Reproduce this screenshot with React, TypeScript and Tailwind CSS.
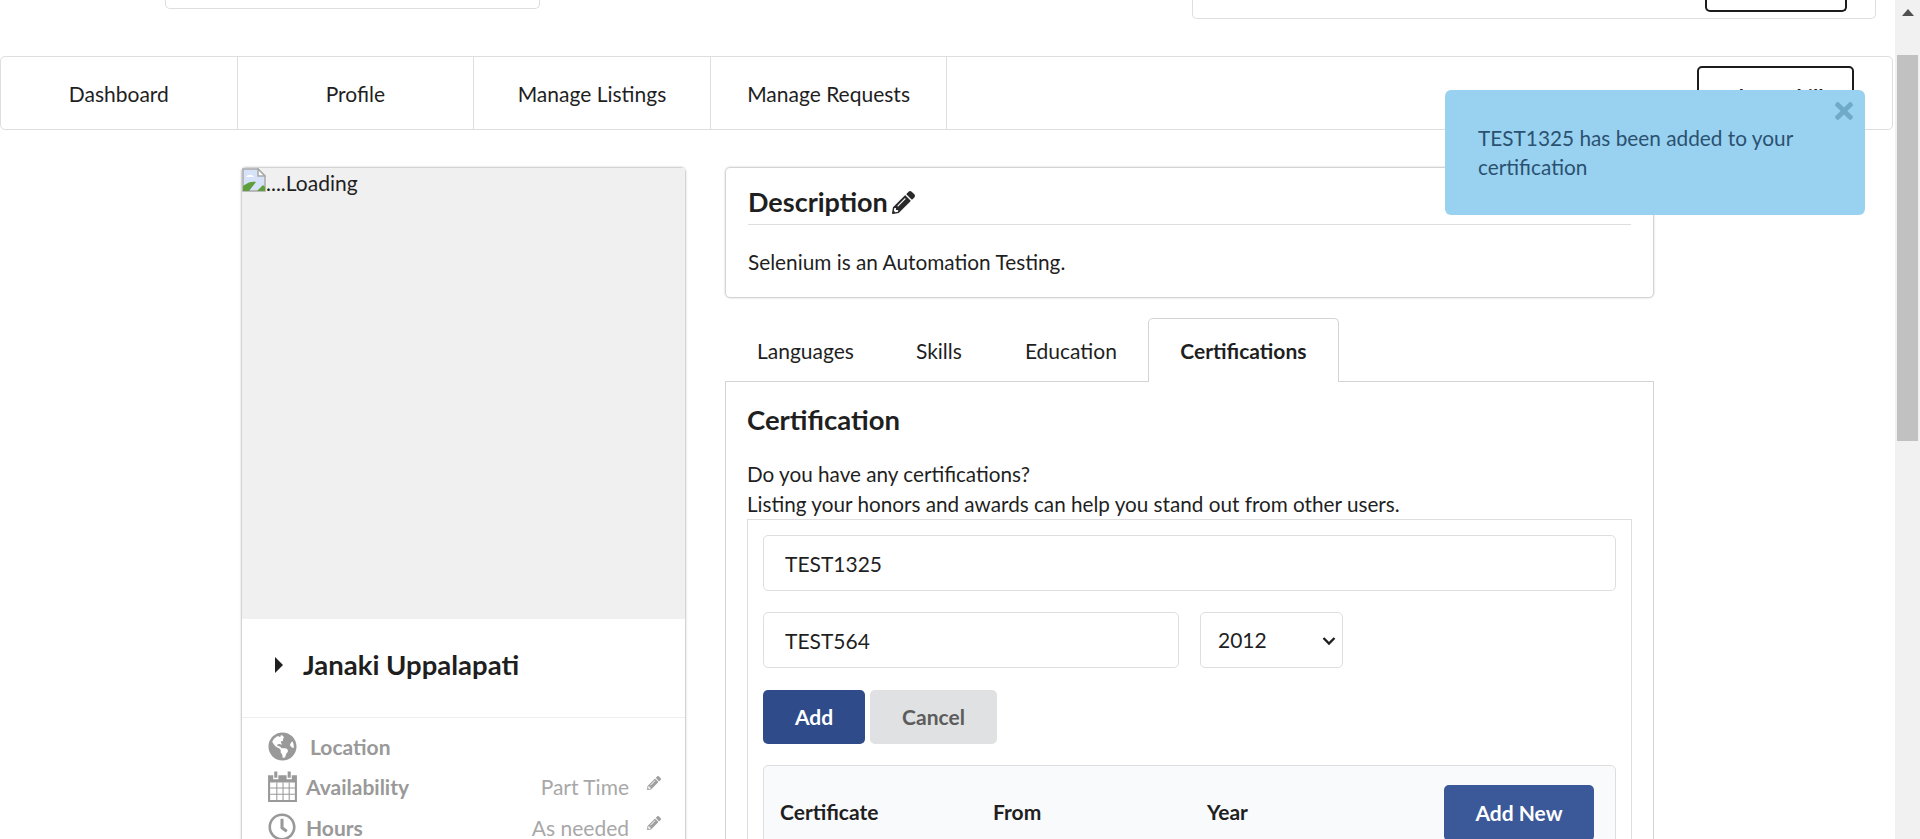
import { FaGlobeAmericas, FaPencilAlt, FaRegClock, FaTimes } from "react-icons/fa"

const navItems = ["Dashboard", "Profile", "Manage Listings", "Manage Requests"]

function BrokenImage() {
  return (
    <svg width="24" height="24" viewBox="0 0 24 24" className="shrink-0">
      <path d="M1 1h15l7 7v15H1z" fill="#d5e2f7" stroke="#a9a9a9" strokeWidth="1.5" />
      <path d="M16 1v7h7z" fill="#fff" stroke="#a9a9a9" strokeWidth="1.5" />
      <path d="M4 9c2-3 6-3 8 0z" fill="#fff" />
      <path d="M1 23v-5c5-4 9-5 13-4l-7 9z" fill="#5f9e3c" />
      <path d="M15 23l6-6 2 2v4z" fill="#5f9e3c" />
    </svg>
  )
}

function CalendarIcon() {
  return (
    <svg width="31" height="33" viewBox="0 0 30 32" className="shrink-0 text-[#999]" fill="currentColor">
      <path d="M1 5h5v4h5V5h8v4h5V5h5v26H1zM3 12v17h24V12z" />
      <path d="M7 1.5h3v6H7zM20 1.5h3v6h-3z" />
      <path d="M3 17h24v1H3zM3 23h24v1H3zM9 12h1v17H9zM15 12h1v17h-1zM21 12h1v17h-1z" />
    </svg>
  )
}

function ProfileRow({ icon, label, value, labelClass }: { icon: React.ReactNode; label: string; value?: string; labelClass: string }) {
  return (
    <div className="flex h-[40.5px] items-center">
      <div className="flex w-[30px] justify-center">{icon}</div>
      <span className={`text-[21px] font-bold text-[#999] ${labelClass}`}>{label}</span>
      {value && <span className="ml-auto text-[21px] text-[#a8a8a8]">{value}</span>}
      {value && <FaPencilAlt className="mb-[8px] ml-[18px] text-[14px] text-[#a0a0a0]" />}
    </div>
  )
}

function App() {
  return (
    <div className="relative flex h-[839px] overflow-hidden bg-white font-['Lato',sans-serif] text-[21px] text-[#1f1f1f]">
      <div className="w-[1895px] shrink-0">
        {/* Scrolled-off cards */}
        <div className="flex h-[18px] items-start">
          <div className="ml-[165px] h-[9px] w-[375px] rounded-b-[5px] border border-t-0 border-[#dedede]" />
          <div className="ml-auto mr-[19px] flex h-[19px] w-[684px] items-start justify-end rounded-b-[5px] border border-t-0 border-[#dedede] pr-[28px]">
            <div className="h-[12px] w-[142px] rounded-b-[5px] border-2 border-t-0 border-[#1b1c1d]" />
          </div>
        </div>

        {/* Menu */}
        <div className="ml-0 mt-[38px] flex h-[74px] w-[1893px] rounded-[5px] border border-[#dedede]">
          {navItems.map((item) => (
            <div key={item} className="flex w-[236.6px] items-center justify-center border-r border-[#dedede] pt-[1px]">
              {item}
            </div>
          ))}
          <div className="ml-auto mr-[38px] mt-[9px] flex h-[56px] w-[157px] justify-center rounded-[5px] border-2 border-[#1b1c1d] pt-[13px] font-bold">
            Share Skill
          </div>
        </div>

        <div className="ml-[241px] mt-[37px] flex items-start gap-[39px]">
          {/* Profile card */}
          <div className="w-[445px] shrink-0 rounded-[5px] border border-[#d4d4d5] shadow-[0_0_2px_0_#c8c8c9]">
            <div className="flex h-[451px] items-start bg-[#f0f0f0] leading-[24px]">
              <BrokenImage />
              <span className="mt-[3px]">....Loading</span>
            </div>
            <div className="flex h-[99px] items-center border-b border-[#eeeeee] pb-[6px] pl-[33px]">
              <span className="h-0 w-0 border-y-[8px] border-l-[8px] border-y-transparent border-l-[#1f1f1f]" />
              <span className="ml-[20px] text-[27.5px] font-bold">Janaki Uppalapati</span>
            </div>
            <div className="pl-[25px] pr-[24px] pt-[8px]">
              <ProfileRow icon={<FaGlobeAmericas className="text-[29px] text-[#999]" />} label="Location" labelClass="ml-[13px]" />
              <ProfileRow icon={<CalendarIcon />} label="Availability" value="Part Time" labelClass="ml-[9px]" />
              <ProfileRow icon={<FaRegClock className="text-[28px] text-[#999]" />} label="Hours" value="As needed" labelClass="ml-[9px]" />
            </div>
          </div>

          {/* Right column */}
          <div className="w-[929px] shrink-0">
            <div className="h-[131px] rounded-[5px] border border-[#d4d4d5] px-[22px] pt-[16px] shadow-[0_0_2px_0_#c8c8c9]">
              <div className="flex h-[41px] items-center gap-[4px] border-b border-[#dedede] pb-[4px]">
                <h2 className="text-[27px] font-bold">Description</h2>
                <FaPencilAlt className="text-[23px] text-[#2a2a2a]" />
              </div>
              <p className="mt-[21px] text-[20.8px]">Selenium is an Automation Testing.</p>
            </div>

            {/* Tabs */}
            <div className="mt-[19px] flex h-[64px] items-end pl-[1px]">
              <div className="flex h-[62px] items-center px-[31px] pt-[2px]">Languages</div>
              <div className="flex h-[62px] items-center pl-[31px] pr-[32px] pt-[2px]">Skills</div>
              <div className="flex h-[62px] items-center px-[31px] pt-[2px]">Education</div>
              <div className="relative top-[1px] flex h-[64px] w-[191px] items-center justify-center rounded-t-[5px] border border-b-0 border-[#d4d4d5] bg-white font-bold">
                Certifications
              </div>
            </div>

            <div className="border border-[#d4d4d5] px-[21px] pt-[20px]">
              <h3 className="text-[27.5px] font-bold leading-[36px]">Certification</h3>
              <p className="mt-[21px] text-[20.7px] leading-[30px]">
                Do you have any certifications?
                <br />
                Listing your honors and awards can help you stand out from other users.
              </p>
              <div className="border border-[#dedede] px-[15px] pt-[15px]">
                <input
                  defaultValue="TEST1325"
                  className="h-[56px] w-full rounded-[5px] border border-[#dedede] px-[21px] outline-none"
                />
                <div className="mt-[21px] flex gap-[21px]">
                  <input
                    defaultValue="TEST564"
                    className="h-[56px] w-[416px] rounded-[5px] border border-[#dedede] px-[21px] outline-none"
                  />
                  <div className="relative">
                    <select
                      defaultValue="2012"
                      className="h-[56px] w-[143px] appearance-none rounded-[5px] border border-[#dedede] bg-white pl-[17px] outline-none"
                    >
                      <option>2011</option>
                      <option>2012</option>
                      <option>2013</option>
                    </select>
                    <svg width="14" height="10" viewBox="0 0 14 10" className="pointer-events-none absolute right-[7px] top-[24px]">
                      <path d="M1.5 2l5.5 5.5L12.5 2" fill="none" stroke="#1f1f1f" strokeWidth="2.4" />
                    </svg>
                  </div>
                </div>
                <div className="mt-[22px] flex gap-[5px]">
                  <button className="h-[54px] w-[102px] rounded-[5px] bg-[#2f4b8a] font-bold text-white">Add</button>
                  <button className="h-[54px] w-[127px] rounded-[5px] bg-[#e0e1e2] font-bold text-[#5c5c5c]">Cancel</button>
                </div>
                <div className="mt-[21px] flex h-[120px] items-start rounded-t-[5px] border border-[#dedede] bg-[#f9fafb] pt-[19px] font-bold">
                  <span className="ml-[16px] w-[213px] leading-[54px]">Certificate</span>
                  <span className="w-[214px] leading-[54px]">From</span>
                  <span className="w-[237px] leading-[54px]">Year</span>
                  <button className="h-[56px] w-[150px] rounded-[5px] bg-[#3b5998] font-bold text-white">Add New</button>
                </div>
              </div>
            </div>
          </div>
        </div>
      </div>

      {/* Scrollbar */}
      <div className="flex w-[25px] shrink-0 flex-col items-center bg-[#f1f1f1] pt-[9px]">
        <span className="h-0 w-0 border-x-[6px] border-b-[7px] border-x-transparent border-b-[#505050]" />
        <div className="mt-[39px] h-[386px] w-[21px] bg-[#c1c1c1]" />
      </div>

      {/* Toast */}
      <div className="absolute left-[1445px] top-[90px] h-[125px] w-[420px] rounded-[6px] bg-[#99d2f0] pl-[33px] pr-[50px] pt-[34px] text-[20.8px] leading-[28.5px] text-[#2b5170]">
        <FaTimes className="absolute right-[8px] top-[8px] text-[26px] text-[#6fabc8]" />
        TEST1325 has been added to your certification
      </div>
    </div>
  )
}

export default App
